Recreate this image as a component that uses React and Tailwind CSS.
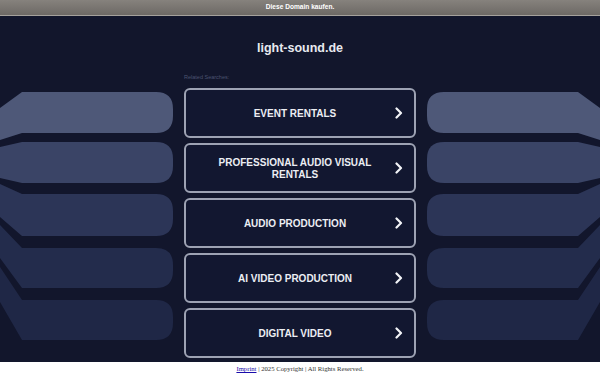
import React from "react";

const bands = [
  { t: 92, b: 133, lt: 108, lb: 140, c: "#4e5878" },
  { t: 142, b: 183, lt: 147, lb: 178, c: "#3a4466" },
  { t: 194, b: 236, lt: 184, lb: 217, c: "#2c3557" },
  { t: 248, b: 288, lt: 225, lb: 258, c: "#232c4c" },
  { t: 300, b: 340, lt: 267, lb: 302, c: "#1f2746" },
];

function Wing({ flip }) {
  const r = 17;
  const R = 173;
  return (
    <svg
      width="173"
      height="346"
      viewBox="0 16 173 346"
      className={flip ? "block shrink-0 -scale-x-100" : "block shrink-0"}
    >
      {bands.map((b, i) => (
        <path
          key={i}
          fill={b.c}
          d={`M0 ${b.lt} L22 ${b.t} L${R - r} ${b.t} Q${R} ${b.t} ${R} ${b.t + r} L${R} ${b.b - r} Q${R} ${b.b} ${R - r} ${b.b} L22 ${b.b} L0 ${b.lb} Z`}
        />
      ))}
    </svg>
  );
}

function Chevron() {
  return (
    <svg width="8" height="12" viewBox="0 0 8 12" className="shrink-0">
      <path d="M1.5 1.5 L6 6 L1.5 10.5" fill="none" stroke="#f2f3f7" strokeWidth="2.2" strokeLinecap="round" strokeLinejoin="round" />
    </svg>
  );
}

const items = [
  "EVENT RENTALS",
  "PROFESSIONAL AUDIO VISUAL RENTALS",
  "AUDIO PRODUCTION",
  "AI VIDEO PRODUCTION",
  "DIGITAL VIDEO",
];

export default function App() {
  return (
    <div
      className="w-[600px] h-[375px] overflow-hidden flex flex-col bg-[#12162c]"
      style={{ fontFamily: '"Liberation Sans", Arial, sans-serif' }}
    >
      <div className="h-[16px] shrink-0 bg-gradient-to-b from-[#86827d] to-[#6d6965] border-b border-[#a5a19c] flex items-center justify-center">
        <span className="text-[6.6px] font-bold text-white leading-none">Diese Domain kaufen.</span>
      </div>
      <div className="flex-1 flex min-h-0">
        <Wing />
        <div className="w-[232px] mx-[11px] flex flex-col shrink-0">
          <div className="mt-[24px] h-[16px] flex items-center justify-center text-[12.5px] font-bold text-[#e8eaf0] leading-none">
            light-sound.de
          </div>
          <div className="mt-[18px] h-[7px] text-[5.5px] leading-[7px] text-[#4c5371]">Related Searches:</div>
          <div className="mt-[7px] flex flex-col gap-[5px]">
            {items.map((t) => (
              <div
                key={t}
                className="h-[50px] rounded-[6px] border-2 border-[#9da2b3] bg-[#121730] flex items-center pl-[20px] pr-[11px]"
              >
                <div className="flex-1 text-center text-[10px] leading-[12px] font-bold text-[#eceef3] pr-[11px] pt-[1px]">
                  {t}
                </div>
                <Chevron />
              </div>
            ))}
          </div>
        </div>
        <Wing flip />
      </div>
      <div className="h-[13px] shrink-0 bg-white flex items-start justify-center">
        <span
          className="text-[6.7px] leading-[13px] text-[#333]"
          style={{ fontFamily: '"Liberation Serif", "Times New Roman", serif' }}
        >
          <a className="text-[#1a0dab] underline">Imprint</a> | 2025 Copyright | All Rights Reserved.
        </span>
      </div>
    </div>
  );
}
